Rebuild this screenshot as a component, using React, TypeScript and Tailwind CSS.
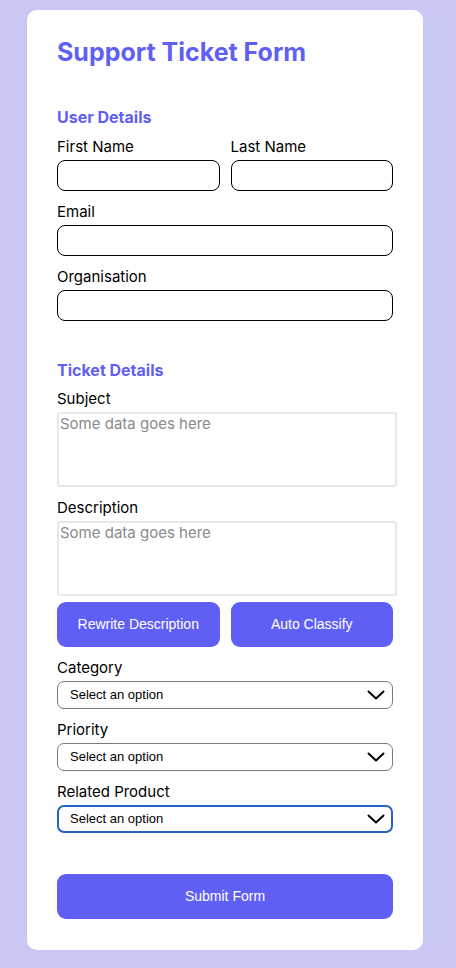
import React from 'react';

const Chevron: React.FC = () => (
  <svg
    width="18"
    height="10"
    viewBox="0 0 18 10"
    fill="none"
    className="pointer-events-none absolute right-[8px] top-1/2 -translate-y-1/2"
  >
    <path d="M1.5 1.5 L9 8.5 L16.5 1.5" stroke="#000" strokeWidth="2" strokeLinecap="round" strokeLinejoin="round" />
  </svg>
);

const Label: React.FC<{ children: React.ReactNode }> = ({ children }) => (
  <label className="block pt-[1px] text-[15px] leading-[18px] text-black mb-[4px]">{children}</label>
);

const TextInput: React.FC = () => (
  <input type="text" className="block w-full h-[31px] rounded-[8px] border border-black bg-white px-2 outline-none" />
);

const TextArea: React.FC = () => (
  <textarea
    placeholder="Some data goes here"
    className="block w-[340px] h-[75px] rounded-[3px] border-2 border-[#e8e8e8] bg-white px-[1px] pt-0 text-[15px] leading-[20px] text-black placeholder:text-[#8a8a8a] resize-none outline-none"
  />
);

const Select: React.FC<{ focused?: boolean }> = ({ focused }) => (
  <div className="relative">
    <select
      defaultValue=""
      className={
        focused
          ? "block w-full h-[28px] appearance-none rounded-[7px] border-2 border-[#2463c8] bg-white pl-[11px] text-[13px] text-black font-['Liberation_Sans',Arial,sans-serif] outline-none"
          : "block w-full h-[28px] appearance-none rounded-[7px] border border-[#7a7a7a] bg-white pl-[12px] text-[13px] text-black font-['Liberation_Sans',Arial,sans-serif] outline-none"
      }
    >
      <option value="">Select an option</option>
    </select>
    <Chevron />
  </div>
);

const PrimaryButton: React.FC<{ children: React.ReactNode; className?: string }> = ({ children, className }) => (
  <button
    type="button"
    className={
      "h-[45px] rounded-[9px] bg-[#5f5ff6] text-white text-[14px] font-['Liberation_Sans',Arial,sans-serif] " +
      (className ?? '')
    }
  >
    {children}
  </button>
);

export default function App() {
  return (
    <div className="min-h-screen bg-[#c9c8f5] pt-[10px] pb-[18px] font-['Inter','Noto_Sans',sans-serif]">
      <div className="mx-[27px] w-[396px] rounded-[10px] bg-white px-[30px] pt-[28px] pb-[31px]">
        {/* Header */}
        <h1 className="text-[25px] leading-[29px] font-bold text-[#5f5ff6]">Support Ticket Form</h1>

        {/* User Details */}
        <h2 className="mt-[41px] mb-[10px] text-[16px] leading-[19px] font-bold text-[#5f5ff6]">User Details</h2>
        <div className="grid grid-cols-2 gap-[11px]">
          <div>
            <Label>First Name</Label>
            <TextInput />
          </div>
          <div>
            <Label>Last Name</Label>
            <TextInput />
          </div>
        </div>
        <div className="mt-[11px]">
          <Label>Email</Label>
          <TextInput />
        </div>
        <div className="mt-[11px]">
          <Label>Organisation</Label>
          <TextInput />
        </div>

        {/* Ticket Details */}
        <h2 className="mt-[40px] mb-[9px] text-[16px] leading-[19px] font-bold text-[#5f5ff6]">Ticket Details</h2>
        <div>
          <Label>Subject</Label>
          <TextArea />
        </div>
        <div className="mt-[11px]">
          <Label>Description</Label>
          <TextArea />
        </div>
        <div className="mt-[6px] grid grid-cols-2 gap-[11px]">
          <PrimaryButton>Rewrite Description</PrimaryButton>
          <PrimaryButton>Auto Classify</PrimaryButton>
        </div>

        <div className="mt-[11px]">
          <Label>Category</Label>
          <Select />
        </div>
        <div className="mt-[11px]">
          <Label>Priority</Label>
          <Select />
        </div>
        <div className="mt-[11px]">
          <Label>Related Product</Label>
          <Select focused />
        </div>

        <PrimaryButton className="mt-[41px] w-full">Submit Form</PrimaryButton>
      </div>
    </div>
  );
}
